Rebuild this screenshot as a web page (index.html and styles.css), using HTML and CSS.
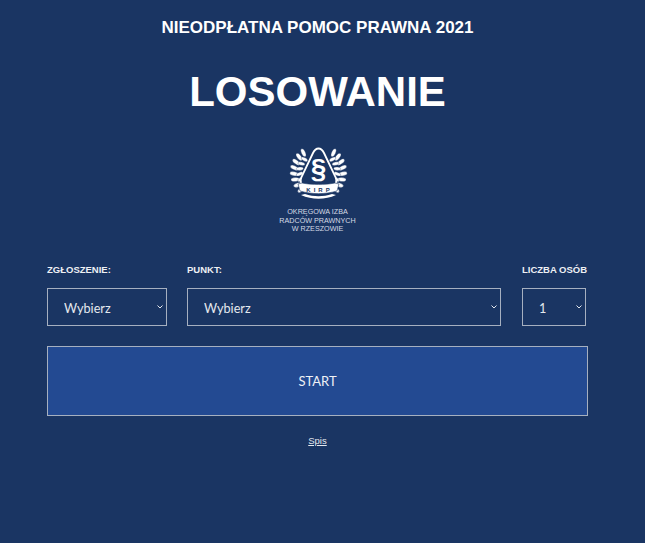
FILE: index.html
```html
<!DOCTYPE html>
<html lang="pl">
<head>
    <meta charset="UTF-8">
    <meta name="viewport" content="width=device-width, initial-scale=1.0">
    <title>Losowanie</title>
    <link rel="stylesheet" href="styles.css">
</head>
<body>
    <div class="container">
        <h2 class="subtitle">NIEODPŁATNA POMOC PRAWNA 2021</h2>
        <h1 class="title">LOSOWANIE</h1>
        <div class="logo">
            <svg class="logo-mark" viewBox="0 0 64 64" width="64" height="64" aria-hidden="true">
                <defs>
                    <g id="branch" fill="#fff" stroke="#1a3563" stroke-width="0.300">
                        <ellipse cx="32.500" cy="5.500" rx="2" ry="4.300" transform="rotate(-38 32.500 30) rotate(14 32.500 5.500)"/>
                        <ellipse cx="32.500" cy="5.500" rx="2" ry="4.300" transform="rotate(-52 32.500 30) rotate(14 32.500 5.500)"/>
                        <ellipse cx="32.500" cy="5.500" rx="2" ry="4.300" transform="rotate(-66 32.500 30) rotate(14 32.500 5.500)"/>
                        <ellipse cx="32.500" cy="5.500" rx="2" ry="4.300" transform="rotate(-80 32.500 30) rotate(14 32.500 5.500)"/>
                        <ellipse cx="32.500" cy="5.500" rx="2" ry="4.300" transform="rotate(-94 32.500 30) rotate(14 32.500 5.500)"/>
                        <ellipse cx="32.500" cy="5.500" rx="2" ry="4.300" transform="rotate(-108 32.500 30) rotate(14 32.500 5.500)"/>
                        <ellipse cx="32.500" cy="5.500" rx="2" ry="4.300" transform="rotate(-122 32.500 30) rotate(14 32.500 5.500)"/>
                        <ellipse cx="32.500" cy="5.500" rx="2" ry="4.300" transform="rotate(-136 32.500 30) rotate(14 32.500 5.500)"/>
                        <ellipse cx="32.500" cy="11" rx="1.700" ry="3.600" transform="rotate(-48 32.500 30) rotate(-14 32.500 11)"/>
                        <ellipse cx="32.500" cy="11" rx="1.700" ry="3.600" transform="rotate(-64 32.500 30) rotate(-14 32.500 11)"/>
                        <ellipse cx="32.500" cy="11" rx="1.700" ry="3.600" transform="rotate(-80 32.500 30) rotate(-14 32.500 11)"/>
                        <ellipse cx="32.500" cy="11" rx="1.700" ry="3.600" transform="rotate(-96 32.500 30) rotate(-14 32.500 11)"/>
                        <ellipse cx="32.500" cy="11" rx="1.700" ry="3.600" transform="rotate(-112 32.500 30) rotate(-14 32.500 11)"/>
                        <ellipse cx="32.500" cy="11" rx="1.700" ry="3.600" transform="rotate(-128 32.500 30) rotate(-14 32.500 11)"/>
                    </g>
                </defs>
                <use href="#branch"/>
                <use href="#branch" transform="translate(65 0) scale(-1 1)"/>
                <path d="M32.500 6.500C30 6.500 28.500 8 27 11L15.500 35C13.500 40 15 43 19 43.500L46 43.500C50 43 51.500 40 49.500 35L38 11C36.500 8 35 6.500 32.500 6.500Z" fill="#1a3563" stroke="#fff" stroke-width="1.800"/>
                <text class="logo-para" x="32.500" y="36" text-anchor="middle">§</text>
                <path d="M12 42L16 41C27 43 38 43 49 41L53 42L51 49C39 52.500 26 52.500 14 49Z" fill="#fff" stroke="#1a3563" stroke-width="0.600"/>
                <path d="M15 53C26 58 39 58 50 53L46 52C37 55 28 55 19 52Z" fill="#fff"/>
                <text class="logo-kirp" x="33.500" y="49.500" text-anchor="middle">KIRP</text>
            </svg>
            <div class="logo-text">OKRĘGOWA IZBA<br>RADCÓW PRAWNYCH<br>W RZESZOWIE</div>
        </div>
        <form class="draw-form">
            <div class="fields">
                <div class="field field-type">
                    <label class="field-label" for="type">ZGŁOSZENIE:</label>
                    <div class="select-wrap">
                        <select id="type"><option>Wybierz</option></select>
                        <svg class="chevron" viewBox="0 0 6 4" width="6" height="4" aria-hidden="true"><path d="M0.500 0.500L3 3L5.500 0.500" fill="none" stroke="#e4e8ee" stroke-width="1"/></svg>
                    </div>
                </div>
                <div class="field field-point">
                    <label class="field-label" for="point">PUNKT:</label>
                    <div class="select-wrap">
                        <select id="point"><option>Wybierz</option></select>
                        <svg class="chevron" viewBox="0 0 6 4" width="6" height="4" aria-hidden="true"><path d="M0.500 0.500L3 3L5.500 0.500" fill="none" stroke="#e4e8ee" stroke-width="1"/></svg>
                    </div>
                </div>
                <div class="field field-count">
                    <label class="field-label" for="count">LICZBA OSÓB</label>
                    <div class="select-wrap">
                        <select id="count"><option>1</option></select>
                        <svg class="chevron" viewBox="0 0 6 4" width="6" height="4" aria-hidden="true"><path d="M0.500 0.500L3 3L5.500 0.500" fill="none" stroke="#e4e8ee" stroke-width="1"/></svg>
                    </div>
                </div>
            </div>
            <button type="button" class="start-btn">START</button>
        </form>
        <div class="links"><a href="#">Spis</a></div>
    </div>
</body>
</html>
```

FILE: styles.css
```css
html, body {
    height: 100%;
}

body {
    margin: 0;
    background-color: #1a3563;
    color: #fff;
    font-family: "Liberation Sans", Arial, sans-serif;
    overflow: hidden;
}

.container {
    padding: 18px 57px 0 47px;
}

.subtitle {
    margin: 0;
    font-size: 17px;
    line-height: 20px;
    font-weight: bold;
    text-align: center;
}

.title {
    margin: 30px 0 0;
    font-size: 42px;
    line-height: 47px;
    font-weight: bold;
    text-align: center;
}

.logo {
    margin-top: 27px;
    text-align: center;
}

.logo-mark {
    display: block;
    margin: 0 auto;
}

.logo-kirp {
    font-family: "Liberation Sans", Arial, sans-serif;
    font-size: 6px;
    font-weight: bold;
    letter-spacing: 3px;
    fill: #1a3563;
}

.logo-para {
    font-family: "Liberation Sans", Arial, sans-serif;
    font-size: 28px;
    font-weight: bold;
    fill: #fff;
}

.logo-text {
    margin-top: 2px;
    font-size: 7.200px;
    line-height: 8.500px;
    color: #d5dbe5;
}

.fields {
    display: flex;
    gap: 20px;
    margin-top: 31.500px;
}

.field-type {
    width: 120px;
}

.field-point {
    width: 314px;
}

.field-count {
    width: 64px;
    margin-left: 1px;
}

.field-label {
    display: block;
    font-size: 9.500px;
    line-height: 10px;
    font-weight: bold;
    color: #eef0f4;
    white-space: nowrap;
    margin-bottom: 13px;
}

.select-wrap {
    position: relative;
}

select {
    display: block;
    width: 100%;
    height: 38px;
    padding: 2px 16px 0;
    appearance: none;
    border: 1px solid #a6b0c0;
    border-radius: 0;
    background-color: #1a3563;
    color: #e4e8ee;
    font-family: Lato, sans-serif;
    font-size: 12.700px;
}

.chevron {
    position: absolute;
    right: 4px;
    top: 17px;
}

.start-btn {
    display: block;
    width: 100%;
    height: 70px;
    margin-top: 20px;
    border: 1px solid #a6b0c0;
    background-color: #234a92;
    color: #eef1f6;
    font-family: Lato, sans-serif;
    font-size: 13px;
    cursor: pointer;
}

.links {
    margin-top: 19px;
    text-align: center;
    font-size: 9.500px;
    line-height: 12px;
}

.links a {
    color: #e4e8ee;
}
```
